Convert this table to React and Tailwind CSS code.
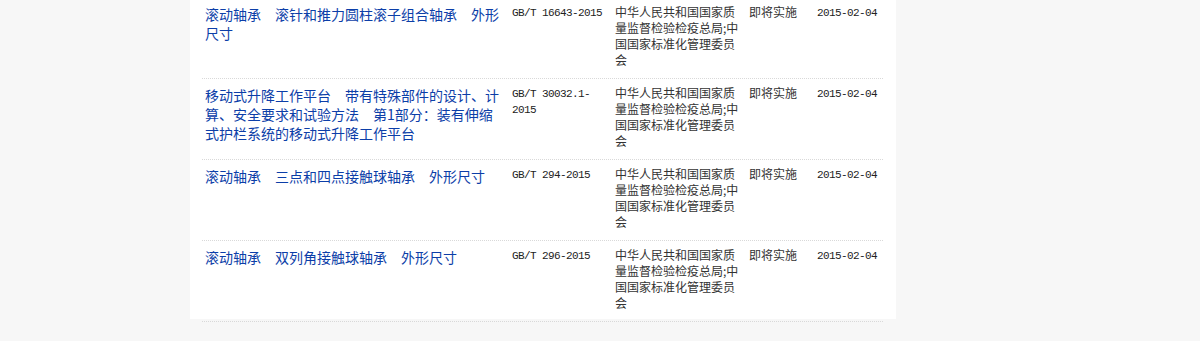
import React from "react";

const rows = [
  {
    title: "滚动轴承　滚针和推力圆柱滚子组合轴承　外形尺寸",
    code: "GB/T 16643-2015",
  },
  {
    title: "移动式升降工作平台　带有特殊部件的设计、计算、安全要求和试验方法　第1部分：装有伸缩式护栏系统的移动式升降工作平台",
    code: "GB/T 30032.1-2015",
  },
  {
    title: "滚动轴承　三点和四点接触球轴承　外形尺寸",
    code: "GB/T 294-2015",
  },
  {
    title: "滚动轴承　双列角接触球轴承　外形尺寸",
    code: "GB/T 296-2015",
  },
];

const issuer = "中华人民共和国国家质量监督检验检疫总局;中国国家标准化管理委员会";

const App = () => {
  return (
    <div className="h-[341px] w-[1200px] overflow-hidden bg-[#f7f7f7] font-['Noto_Sans_CJK_SC',sans-serif]">
      <div className="ml-[190px] h-[321px] w-[706px] bg-white pl-[12px]">
        <div className="-mt-[2px] w-[681px]">
          {rows.map((r) => (
            <div key={r.code} className="flex h-[81px] border-b border-dotted border-[#d9d9d9]">
              <div className="w-[303px] shrink-0 pl-[3px] pt-[7px] text-[14px] leading-[19px] text-[#0c3ea8]">
                <a href="#">{r.title}</a>
              </div>
              <div className="w-[107px] shrink-0 pl-[7px] pt-[7px] font-['Liberation_Mono',monospace] text-[11px] leading-[16px] tracking-[-0.6px] text-[#222]">
                {r.code}
              </div>
              <div className="w-[134px] shrink-0 pl-[3px] pr-[3px] pt-[6px] text-[12px] leading-[16px] text-[#333]">
                {issuer}
              </div>
              <div className="w-[68px] shrink-0 pl-[3px] pt-[6px] text-[12px] leading-[16px] text-[#333]">即将实施</div>
              <div className="w-[69px] shrink-0 pl-[3px] pt-[7px] font-['Liberation_Mono',monospace] text-[11px] leading-[16px] tracking-[-0.6px] text-[#222]">
                2015-02-04
              </div>
            </div>
          ))}
        </div>
      </div>
    </div>
  );
};

export default App;
